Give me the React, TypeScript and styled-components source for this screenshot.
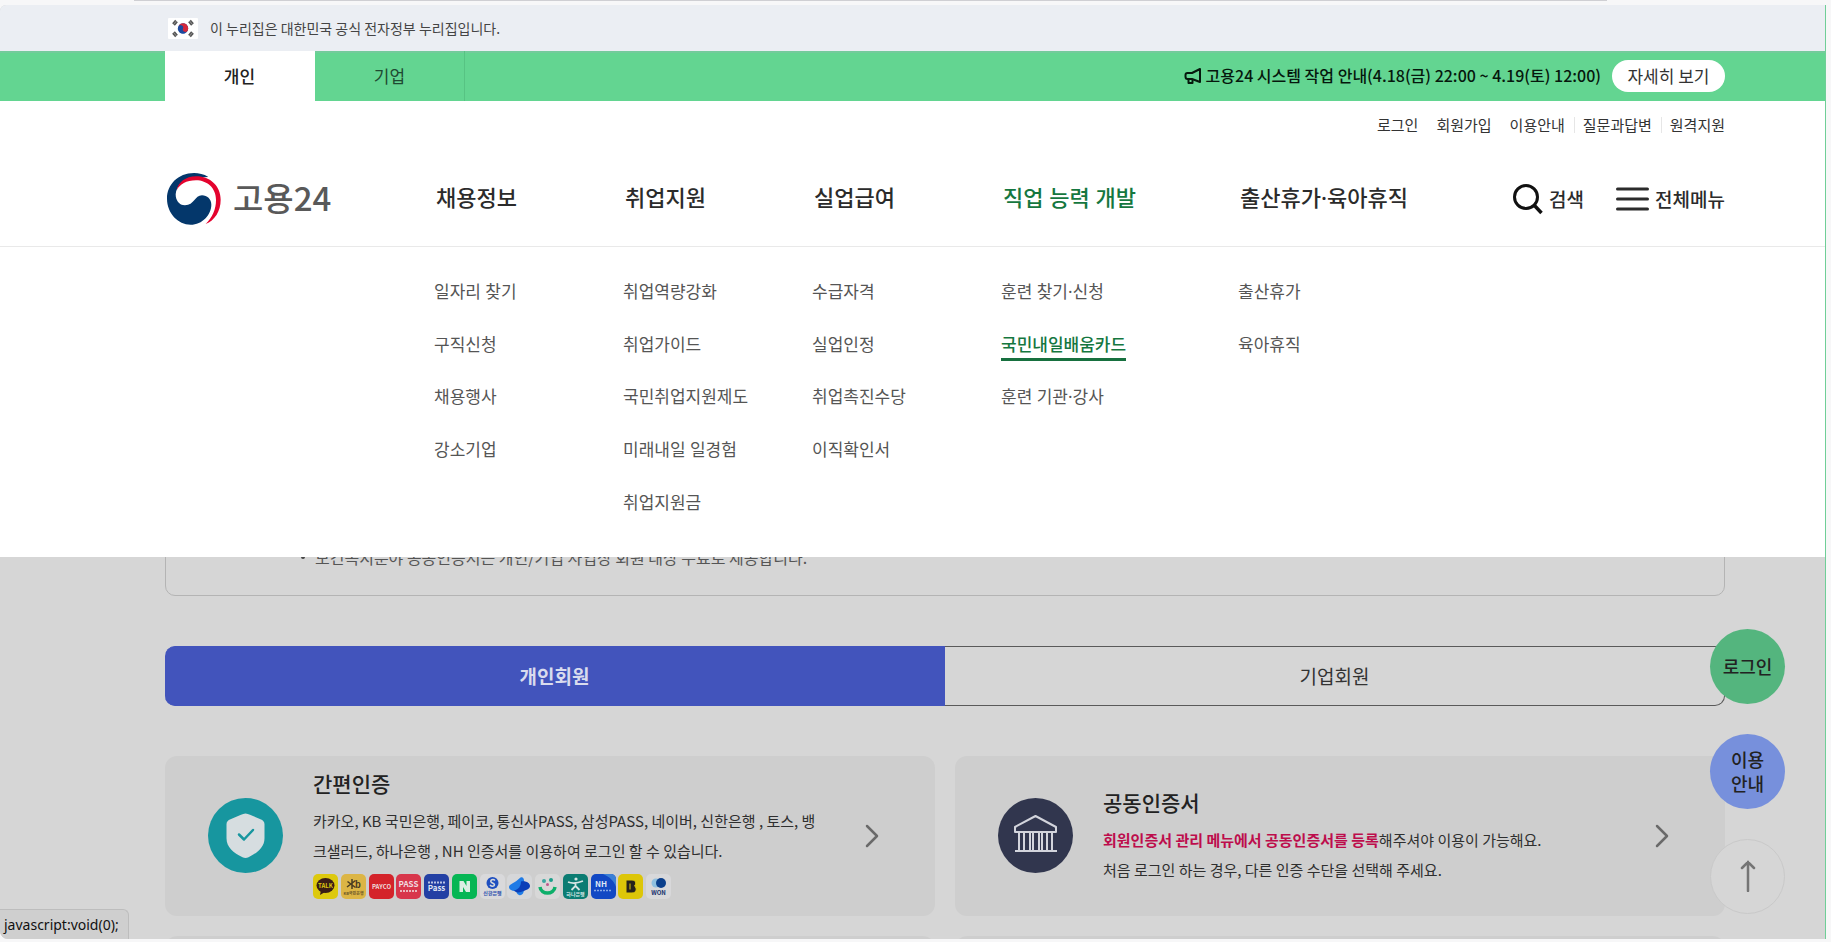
import React from "react";
import styled, { createGlobalStyle, css } from "styled-components";

const GlobalStyle = createGlobalStyle`
  *, *::before, *::after { box-sizing: border-box; }
  body {
    margin: 0;
    background: #f7f7f8;
    color: #222;
    font-family: "Noto Sans CJK KR", "Noto Sans", sans-serif;
  }
  button { font-family: inherit; border: 0; padding: 0; background: none; cursor: pointer; color: inherit; }
  a { color: inherit; text-decoration: none; }
  ul { list-style: none; margin: 0; padding: 0; }
  h1, h2, p { margin: 0; }
`;

const Frame = styled.div`
  position: relative;
  height: 100vh;
  padding: 5px 5px 3px 0;
  background: #f7f7f8;
`;

const TabStripEdge = styled.div`
  position: absolute;
  top: 0;
  left: 134px;
  right: 224px;
  height: 1px;
  background: #cfcfd3;
`;

const Page = styled.div`
  position: relative;
  height: 100%;
  overflow: hidden;
  display: flex;
  flex-direction: column;
  border-right: 1px solid #6fce97;
  border-radius: 6px 0 0 8px;
  background: #d6d6d6;
`;

const Row = styled.div`
  display: flex;
  align-items: center;
  padding: 0 100px 0 165px;
  flex-shrink: 0;
`;

const OfficialBanner = styled(Row)`
  height: 46px;
  gap: 12px;
  padding-left: 168px;
  background: #ebeef3;
  color: #444;
  font-size: 14px;
`;

const MemberBar = styled(Row)`
  height: 50px;
  background: #63d591;
  box-shadow: inset 0 2px 0 #73cb9b;
  justify-content: space-between;
`;

const MemberTabs = styled.nav`
  display: flex;
  align-self: stretch;
`;

const MemberTab = styled.a<{ $active?: boolean }>`
  width: 150px;
  display: flex;
  align-items: center;
  justify-content: center;
  padding-bottom: 2px;
  font-size: 17px;
  color: #1f4a32;
  border-right: 1px solid #57c383;
  ${(p) =>
    p.$active &&
    css`
      background: #fff;
      border-color: #fff;
      color: #222;
      font-weight: 500;
    `}
`;

const SystemNotice = styled.div`
  display: flex;
  align-items: center;
  font-size: 16px;
  font-weight: 500;
  color: #06180d;
  svg { margin-right: 4px; }
  span { padding-bottom: 2px; }
`;

const DetailButton = styled.button`
  width: 113px;
  height: 32px;
  margin-left: 11px;
  border-radius: 16px;
  background: #fff;
  color: #333;
  font-size: 17px;
  line-height: 30px;
`;

const Header = styled.header`
  flex-shrink: 0;
  background: #fff;
  border-bottom: 1px solid #e9e9e9;
`;

const Utility = styled(Row)`
  height: 50px;
  padding-bottom: 2px;
  justify-content: flex-end;
  font-size: 15px;
  color: #333;
`;

const UtilityLink = styled.a<{ $divided?: boolean }>`
  margin-left: 18px;
  line-height: 16px;
  ${(p) =>
    p.$divided &&
    css`
      margin-left: 9px;
      padding-left: 8px;
      border-left: 1px solid #e6e6e6;
    `}
`;

const columns = css`
  display: grid;
  grid-template-columns: 269px 189px 189px 189px 237px 1fr;
`;

const MainNav = styled(Row)`
  ${columns}
  height: 95px;
`;

const Logo = styled.a`
  display: flex;
  align-items: center;
  gap: 12px;
  padding-left: 2px;
  color: #595959;
  font-size: 33px;
  font-weight: 500;
  line-height: 36px;
  span { padding-bottom: 4px; }
`;

const NavTitle = styled.a<{ $active?: boolean }>`
  padding: 0 0 4px 2px;
  font-family: "Noto Sans", "Noto Sans CJK KR", sans-serif;
  font-size: 22px;
  font-weight: 500;
  line-height: 32px;
  white-space: nowrap;
  color: ${(p) => (p.$active ? "#15773f" : "#2b2b2b")};
`;

const NavEnd = styled.div`
  display: flex;
  align-items: center;
  justify-content: space-between;
`;

const Tools = styled.div`
  display: flex;
  gap: 32px;
`;

const ToolButton = styled.button`
  display: flex;
  align-items: center;
  gap: 6px;
  font-size: 19px;
  font-weight: 500;
  white-space: nowrap;
  color: #2b2b2b;
`;

const MegaMenu = styled.nav`
  ${columns}
  flex-shrink: 0;
  padding: 19px 100px 28px 165px;
  background: #fff;
`;

const MenuList = styled.ul`
  display: grid;
  grid-template-rows: repeat(5, 1fr);
  height: 263px;
  align-items: center;
`;

const MenuLink = styled.a<{ $active?: boolean }>`
  display: inline-block;
  font-family: "Noto Sans", "Noto Sans CJK KR", sans-serif;
  font-size: 17px;
  line-height: 26px;
  color: #555;
  ${(p) =>
    p.$active &&
    css`
      color: #15773f;
      font-weight: 500;
      box-shadow: 0 3px 0 #17703f;
    `}
`;

const Main = styled.main`
  flex: 1;
  min-height: 0;
  overflow: hidden;
  padding: 0 100px 0 165px;
`;

const GuideBox = styled.section`
  margin-top: -60px;
  height: 99px;
  padding: 46px 0 0 135px;
  border: 1px solid #b4b4b4;
  border-radius: 10px;
  font-size: 16px;
  line-height: 26px;
  color: #555;
`;

const GuideItem = styled.li`
  display: flex;
  gap: 10px;
  align-items: center;
  &::before {
    content: "";
    width: 4px;
    height: 4px;
    border-radius: 2px;
    background: #444;
  }
`;

const Tabs = styled.div`
  display: flex;
  margin: 50px 0;
`;

const TabButton = styled.button<{ $active?: boolean }>`
  flex: 1;
  height: 60px;
  padding-bottom: 2px;
  font-size: 19px;
  color: #333;
  border: 1px solid #5a5a5a;
  border-left: 0;
  border-radius: 0 10px 10px 0;
  ${(p) =>
    p.$active &&
    css`
      border-color: #4254bc;
      border-radius: 10px 0 0 10px;
      background: #4254bc;
      color: #d9dcee;
      font-weight: 700;
    `}
`;

const Cards = styled.div`
  display: grid;
  grid-template-columns: 1fr 1fr;
  grid-auto-rows: 160px;
  gap: 20px;
`;

const Card = styled.a`
  display: flex;
  align-items: center;
  gap: 30px;
  padding: 0 56px 1px 43px;
  border-radius: 12px;
  background: #cecece;
`;

const CardText = styled.div`
  flex: 1;
  font-size: 15px;
  line-height: 30px;
  color: #2f2f2f;
  white-space: nowrap;
`;

const CardTitle = styled.h2`
  margin-bottom: 8px;
  font-size: 21px;
  font-weight: 500;
  line-height: 30px;
  color: #222;
`;

const Highlight = styled.strong`
  font-weight: 700;
  color: #bd0d4c;
`;

const Badges = styled.ul`
  display: flex;
  justify-content: space-between;
  width: 358px;
  margin: 8px 0 5px;
  svg { display: block; }
`;

const QuickMenu = styled.aside`
  position: absolute;
  right: 40px;
  bottom: 25px;
  display: grid;
  gap: 30px;
`;

const QuickButton = styled.button<{ $bg: string; $outlined?: boolean }>`
  width: 75px;
  height: 75px;
  padding-bottom: 2px;
  display: flex;
  align-items: center;
  justify-content: center;
  border-radius: 50%;
  background: ${(p) => p.$bg};
  border: ${(p) => (p.$outlined ? "1px solid #c9c9c9" : "0")};
  font-size: 18px;
  font-weight: 500;
  line-height: 24px;
  color: #222;
`;

const StatusBubble = styled.div`
  position: absolute;
  left: 0;
  bottom: 0;
  height: 30px;
  padding: 0 9px 0 4px;
  border: 1px solid #bdbdbd;
  border-width: 1px 1px 0 0;
  border-radius: 0 6px 0 0;
  background: #cfcfcf;
  color: #111;
  font-family: "Noto Sans", sans-serif;
  font-size: 14px;
  line-height: 29px;
`;

const Flag = () => (
  <svg width="30" height="21" viewBox="0 0 30 21" aria-hidden="true">
    <rect width="30" height="21" rx="1" fill="#fff" />
    <g transform="rotate(20 15 10.5)">
      <circle cx="15" cy="10.5" r="5.200" fill="#1c4aa0" />
      <path d="M9.800 10.500a5.200 5.200 0 0 1 10.400 0a2.600 2.600 0 0 1-5.200 0a2.600 2.600 0 0 0-5.200 0z" fill="#d2283c" />
    </g>
    <g stroke="#555" strokeWidth="3.600">
      <path d="M5.500 6.500l3-3.500M24.500 6.500l-3-3.500M5.500 14.500l3 3.500M24.500 14.500l-3 3.500" />
    </g>
    <g stroke="#bbb" strokeWidth=".6">
      <path d="M5.500 6.500l3-3.500M24.500 6.500l-3-3.500M5.500 14.500l3 3.500M24.500 14.500l-3 3.500" />
    </g>
  </svg>
);

const Taegeuk = () => (
  <svg width="54" height="52" viewBox="22 40 162 156" aria-hidden="true">
    <path
      fill="#04376b"
      d="M146 52C132 43 118 40 103 40C55 40 22 75 22 117C22 160 55 195 93 195C128 195 155 165 155 135C155 118 142 107 127 107C105 107 104 137 76 137C58 137 48 122 48 104C50 78 72 56 104 54Z"
    />
    <path
      fill="#e4032e"
      d="M51 92C55 69 77 50 110 50C152 50 183 80 183 120C183 155 165 182 138 193C158 172 169 150 169 120C169 85 142 62 109 62C80 62 60 74 51 92Z"
    />
  </svg>
);

const Megaphone = () => (
  <svg width="18" height="18" viewBox="0 0 18 18" fill="none" stroke="#06180d" strokeWidth="2" strokeLinejoin="round" aria-hidden="true">
    <path d="M16 2v13L8 12H3.500C2 12 1.500 11 1.500 9.500V8C1.500 6.500 2 6 3.500 6H8z" />
    <path d="M4.500 12v4h4v-3.500" />
  </svg>
);

const SearchIcon = () => (
  <svg width="30" height="32" viewBox="0 0 30 32" fill="none" stroke="#111" strokeWidth="3" aria-hidden="true">
    <circle cx="13" cy="14" r="11.500" />
    <path d="M21 22l7.500 8" strokeWidth="3.500" />
  </svg>
);

const MenuIcon = () => (
  <svg width="33" height="26" viewBox="0 0 33 26" stroke="#2b2b2b" strokeWidth="3" strokeLinecap="round" aria-hidden="true">
    <path d="M1.500 3h30M1.500 13h30M1.500 23h30" />
  </svg>
);

const Chevron = () => (
  <svg width="14" height="24" viewBox="0 0 14 24" fill="none" stroke="#6a6a6a" strokeWidth="2.500" strokeLinecap="round" strokeLinejoin="round" aria-hidden="true">
    <path d="M2 2l10 10L2 22" />
  </svg>
);

const ShieldIcon = () => (
  <svg width="75" height="75" viewBox="0 0 75 75" aria-hidden="true">
    <circle cx="37.500" cy="37.500" r="37.500" fill="#17969f" />
    <path
      d="M37.500 15.500c1.500 0 3 .6 4.500 1.300l10.500 4.500c2.500 1 4 2.500 4 5v14c0 9-7 14.500-16 19c-2 1-4 1-6 0c-9-4.500-16-10-16-19v-14c0-2.500 1.500-4 4-5l10.500-4.500c1.500-.7 3-1.300 4.500-1.300z"
      fill="#d6dde0"
    />
    <path d="M31 36.500l5 5l9-9.500" fill="none" stroke="#17969f" strokeWidth="2.500" strokeLinecap="round" strokeLinejoin="round" />
  </svg>
);

const BankIcon = () => (
  <svg width="75" height="75" viewBox="0 0 75 75" aria-hidden="true">
    <circle cx="37.500" cy="37.500" r="37.500" fill="#31364e" />
    <g fill="none" stroke="#d2d4dc" strokeWidth="2" strokeLinejoin="round">
      <path d="M17 34v-5l20.500-11l20.500 11v5z" />
      <path d="M21 34v18M54 34v18M26 35v17M32 35v17M35 35v17M41 35v17M44 35v17M49 35v17M17 53h42" />
    </g>
  </svg>
);

const badgeFill = ["#ddc90e", "#dcb545", "#d4232a", "#d8364b", "#2340a4", "#06b654", "#d9d9db", "#d6d7d9", "#d8d8d8", "#0b7c72", "#1148c4", "#ddc608", "#d8d8da"];

const Mark = ({ x = 12.5, y, size, fill, bold = 700, children }: { x?: number; y: number; size: number; fill: string; bold?: number; children: string }) => (
  <text x={x} y={y} fontSize={size} fill={fill} fontWeight={bold} textAnchor="middle">
    {children}
  </text>
);

const badgeArt = [
  <g key="talk">
    <ellipse cx="12.500" cy="11.500" rx="9" ry="7.500" fill="#3a1d16" />
    <path d="M8 16l-1 5l5-3z" fill="#3a1d16" />
    <Mark y={14} size={6} fill="#ddc90e">TALK</Mark>
  </g>,
  <g key="kb">
    <path d="M11 5v10M6.500 7.500l8 6M6 13l8.500-6.500" stroke="#4a3d22" strokeWidth="1.500" />
    <Mark x={17} y={14} size={9} fill="#4a3d22">b</Mark>
    <Mark y={21} size={4} fill="#6b5528">KB국민은행</Mark>
  </g>,
  <Mark key="payco" y={15} size={6} fill="#edd">PAYCO</Mark>,
  <g key="pass">
    <Mark y={13} size={8} fill="#f0dde0">PASS</Mark>
    <path d="M4 17h17" stroke="#eab7bd" strokeWidth="2" strokeDasharray="2 1" />
  </g>,
  <g key="samsung">
    <path d="M4 8.500h17" stroke="#b9c2e4" strokeWidth="2" strokeDasharray="2 1" />
    <Mark y={17} size={8} fill="#dfe3f3">Pass</Mark>
  </g>,
  <path key="naver" d="M7.500 7h4l3 5V7h3.500v11h-4l-3-5v5H7.500z" fill="#dbeee2" />,
  <g key="shinhan">
    <circle cx="12.500" cy="9" r="6" fill="#1f4fc0" />
    <path d="M15 6.500c-2-2-5-.5-4 1.300s3.500 1.200 3.500 3s-3 2-4.500 .2" fill="none" stroke="#d9d9db" strokeWidth="1.500" />
    <Mark y={21} size={5} fill="#2a4fae">신한은행</Mark>
  </g>,
  <g key="toss">
    <path d="M13.500 3.500c2-1 3.500 .5 3.500 3v9c0 4-2.500 6.500-5 5.500c-2-1-2.500-2.500-3-4c-5 0-7-2-7-4c0-3 6-4 11.500-9.500z" fill="#1f7be6" />
    <path d="M14 7.500c5-1 9 1.500 9 4.500s-4 4-9 6c-4 1-6 0-7-1.500c5-1 7-5 7-9z" fill="#0b3fb8" />
  </g>,
  <g key="banksalad">
    <path d="M5 13c1 8 14 8 15 0" fill="none" stroke="#0daf6a" strokeWidth="3.500" />
    <circle cx="9" cy="7" r="2" fill="#3aa7a0" />
    <circle cx="16" cy="6" r="2" fill="#1c9f8a" />
    <circle cx="12.500" cy="10.500" r="1.500" fill="#c0568c" />
  </g>,
  <g key="hana">
    <circle cx="13" cy="5" r="1.600" fill="#d6e6e4" />
    <path d="M5 8c5 2 10 1 15-1M12.500 8v4l-4 4M12.500 12l4 4" fill="none" stroke="#d6e6e4" strokeWidth="1.800" />
    <Mark y={22} size={5} fill="#d6e6e4">하나은행</Mark>
  </g>,
  <g key="nh">
    <path d="M12 0h8a5 5 0 0 1 5 5v8c-2-6-6-10-13-13z" fill="#3a7fd6" />
    <Mark x={10} y={13} size={8} fill="#dfe8f6">NH</Mark>
    <path d="M3 16.500h18" stroke="#86a8e6" strokeWidth="1.500" strokeDasharray="2 1" />
  </g>,
  <path key="b" d="M8 6h6c4 0 4.500 4 2.500 6c3 2 2 7-2.500 7H8zM12 9.500v6" fill="#26221c" stroke="#ddc608" strokeWidth="1" />,
  <g key="won">
    <circle cx="10" cy="9" r="4.500" fill="#8fc0e0" />
    <circle cx="15" cy="9" r="5" fill="#0b3f8c" />
    <Mark y={21} size={6} fill="#142f6b">WON</Mark>
  </g>,
];

const menu = [
  { title: "채용정보", items: ["일자리 찾기", "구직신청", "채용행사", "강소기업"] },
  { title: "취업지원", items: ["취업역량강화", "취업가이드", "국민취업지원제도", "미래내일 일경험", "취업지원금"] },
  { title: "실업급여", items: ["수급자격", "실업인정", "취업촉진수당", "이직확인서"] },
  { title: "직업 능력 개발", items: ["훈련 찾기·신청", "국민내일배움카드", "훈련 기관·강사"] },
  { title: "출산휴가·육아휴직", items: ["출산휴가", "육아휴직"] },
];

const activeTitle = "직업 능력 개발";
const activeItem = "국민내일배움카드";

export default function App() {
  return (
    <Frame>
      <GlobalStyle />
      <TabStripEdge />
      <Page>
        <OfficialBanner>
          <Flag />
          <span>이 누리집은 대한민국 공식 전자정부 누리집입니다.</span>
        </OfficialBanner>
        <MemberBar>
          <MemberTabs>
            <MemberTab href="#personal" $active>개인</MemberTab>
            <MemberTab href="#company">기업</MemberTab>
          </MemberTabs>
          <SystemNotice>
            <Megaphone />
            <span>고용24 시스템 작업 안내(4.18(금) 22:00 ~ 4.19(토) 12:00)</span>
            <DetailButton type="button">자세히 보기</DetailButton>
          </SystemNotice>
        </MemberBar>
        <Header>
          <Utility>
            <UtilityLink href="#login">로그인</UtilityLink>
            <UtilityLink href="#join">회원가입</UtilityLink>
            <UtilityLink href="#guide">이용안내</UtilityLink>
            <UtilityLink href="#faq" $divided>질문과답변</UtilityLink>
            <UtilityLink href="#remote" $divided>원격지원</UtilityLink>
          </Utility>
          <MainNav>
            <Logo href="#home">
              <Taegeuk />
              <span>고용24</span>
            </Logo>
            {menu.slice(0, 4).map((m) => (
              <NavTitle key={m.title} href="#menu" $active={m.title === activeTitle}>
                {m.title}
              </NavTitle>
            ))}
            <NavEnd>
              <NavTitle href="#menu">{menu[4].title}</NavTitle>
              <Tools>
                <ToolButton type="button">
                  <SearchIcon />
                  검색
                </ToolButton>
                <ToolButton type="button">
                  <MenuIcon />
                  전체메뉴
                </ToolButton>
              </Tools>
            </NavEnd>
          </MainNav>
        </Header>
        <MegaMenu>
          <span />
          {menu.map((m) => (
            <MenuList key={m.title}>
              {m.items.map((item) => (
                <li key={item}>
                  <MenuLink href="#item" $active={item === activeItem}>{item}</MenuLink>
                </li>
              ))}
            </MenuList>
          ))}
        </MegaMenu>
        <Main>
          <GuideBox>
            <ul>
              <GuideItem>보건복지분야 공동인증서는 개인/기업 사업장 회원 대상 무료로 제공합니다.</GuideItem>
            </ul>
          </GuideBox>
          <Tabs>
            <TabButton type="button" $active>개인회원</TabButton>
            <TabButton type="button">기업회원</TabButton>
          </Tabs>
          <Cards>
            <Card href="#simple">
              <ShieldIcon />
              <CardText>
                <CardTitle>간편인증</CardTitle>
                <p>
                  카카오, KB 국민은행, 페이코, 통신사PASS, 삼성PASS, 네이버, 신한은행 , 토스, 뱅
                  <br />
                  크샐러드, 하나은행 , NH 인증서를 이용하여 로그인 할 수 있습니다.
                </p>
                <Badges>
                  {badgeArt.map((art, i) => (
                    <li key={i}>
                      <svg width="25" height="25" viewBox="0 0 25 25" aria-hidden="true">
                        <rect width="25" height="25" rx="5" fill={badgeFill[i]} />
                        {art}
                      </svg>
                    </li>
                  ))}
                </Badges>
              </CardText>
              <Chevron />
            </Card>
            <Card href="#joint">
              <BankIcon />
              <CardText>
                <CardTitle>공동인증서</CardTitle>
                <p>
                  <Highlight>회원인증서 관리 메뉴에서 공동인증서를 등록</Highlight>해주셔야 이용이 가능해요.
                  <br />
                  처음 로그인 하는 경우, 다른 인증 수단을 선택해 주세요.
                </p>
              </CardText>
              <Chevron />
            </Card>
            <Card href="#more" />
            <Card href="#more" />
          </Cards>
        </Main>
        <QuickMenu>
          <QuickButton type="button" $bg="#54b57e">로그인</QuickButton>
          <QuickButton type="button" $bg="#7790dc">
            이용
            <br />
            안내
          </QuickButton>
          <QuickButton type="button" $bg="#d6d6d6" $outlined aria-label="맨 위로">
            <svg width="16" height="32" viewBox="0 0 16 32" fill="none" stroke="#757575" strokeWidth="2.500" strokeLinecap="round" aria-hidden="true">
              <path d="M8 31V2M2 8l6-6l6 6" />
            </svg>
          </QuickButton>
        </QuickMenu>
        <StatusBubble>javascript:void(0);</StatusBubble>
      </Page>
    </Frame>
  );
}
